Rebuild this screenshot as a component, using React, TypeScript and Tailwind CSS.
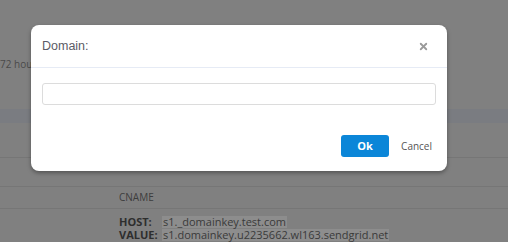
import { X } from 'lucide-react'

export default function App() {
  return (
    <div className="relative h-[242px] w-[508px] overflow-hidden bg-[#808080] font-['Open_Sans',sans-serif] text-[10px]">
      {/* page behind the dimmed overlay */}
      <div className="h-[109px] pt-[57px]">
        <p className="text-[#4a4a4a]">72 hours</p>
      </div>
      <div className="h-[14px] bg-[#7a7c81]" />
      <div className="h-[35px] border-b border-[#767676]" />
      <div className="h-[29px] border-b border-[#767676]" />
      <div className="flex h-[22px] items-center border-b border-[#767676] pl-[119px] text-[#3d3d3d]">
        CNAME
      </div>
      <div className="flex flex-col gap-[1px] pl-[119px] pt-[7px] text-[11px] leading-[12px]">
        <div className="flex">
          <span className="w-[43px] font-bold text-[#2e2e2e]">HOST:</span>
          <span className="bg-[#8d8d8d] px-[1px] text-[#3a3a3a]">s1._domainkey.test.com</span>
        </div>
        <div className="flex">
          <span className="w-[43px] font-bold text-[#2e2e2e]">VALUE:</span>
          <span className="bg-[#8d8d8d] px-[1px] text-[#3a3a3a]">s1.domainkey.u2235662.wl163.sendgrid.net</span>
        </div>
      </div>

      {/* modal */}
      <div className="absolute left-[31px] top-[25px] flex h-[146px] w-[416px] flex-col rounded-[8px] bg-white shadow-[0_2px_4px_rgba(0,0,0,0.35)]">
        <div className="flex h-[43px] items-center justify-between border-b border-[#e6ebf5] pl-[11px] pr-[18px]">
          <span className="pt-[1px] font-['Liberation_Sans',Arial,sans-serif] text-[12.5px] text-[#5b5b66]">Domain:</span>
          <X className="h-[11px] w-[11px] text-[#9a9a9a]" strokeWidth={4} />
        </div>
        <div className="px-[11px] pt-[15px]">
          <input className="h-[22px] w-full rounded-[3px] border border-[#dcdcdc] outline-none" />
        </div>
        <div className="mt-auto flex items-center justify-end gap-[12px] pb-[14px] pr-[15px]">
          <button className="h-[22px] w-[48px] rounded-[3px] bg-[#0b86d8] text-[11px] font-bold text-white">Ok</button>
          <button className="text-[10px] text-[#555]">Cancel</button>
        </div>
      </div>
    </div>
  )
}
